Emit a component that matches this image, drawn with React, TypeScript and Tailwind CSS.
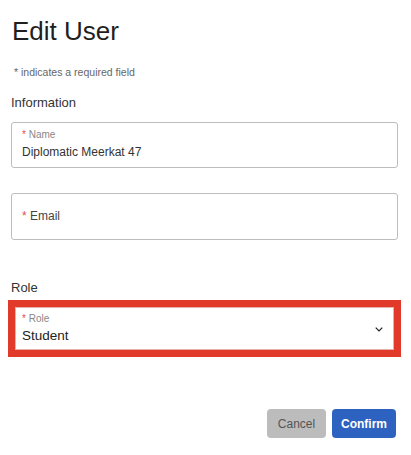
export default function App() {
  return (
    <div className="min-h-screen bg-white font-['Liberation_Sans',Arial,sans-serif] text-[#222]">
      <div className="flex flex-col pl-[11px] pr-[13px] pt-[16px]">
        {/* Header */}
        <h1 className="pl-px text-[26px] leading-[30px] font-normal text-[#1f1f1f]">Edit User</h1>
        <p className="mt-[19px] pl-[3px] text-[10.5px] leading-[14px] text-[#666]">* indicates a required field</p>

        {/* Information */}
        <h2 className="mt-[15px] text-[13px] leading-[18px] text-[#333]">Information</h2>
        <div className="mt-[10px] flex h-[46px] flex-col rounded-[3px] border border-[#bdbdbd] pl-[10px] pt-[6px]">
          <span className="text-[10px] leading-[12px] text-[#888]">
            <span className="text-[#d9534f]">*</span> Name
          </span>
          <span className="mt-[4px] text-[12px] leading-[15px] text-[#333]">Diplomatic Meerkat 47</span>
        </div>
        <div className="mt-[25px] flex h-[47px] items-center rounded-[3px] border border-[#bdbdbd] pl-[10px]">
          <span className="text-[12px] leading-[15px] text-[#444]">
            <span className="text-[#d9534f]">*</span> Email
          </span>
        </div>

        {/* Role */}
        <h2 className="mt-[39px] text-[13px] leading-[18px] text-[#333]">Role</h2>
        <div className="-mx-[3px] mt-[3px] border-[7px] border-[#e23a2a]">
          <div className="flex h-[43px] items-center justify-between border border-[#e8b0aa] bg-white pl-[6px] pr-[10px]">
            <div className="flex flex-col">
              <span className="text-[10px] leading-[12px] text-[#888]">
                <span className="text-[#d9534f]">*</span> Role
              </span>
              <span className="mt-[2px] text-[13.5px] leading-[17px] text-[#222]">Student</span>
            </div>
            <svg width="8" height="5" viewBox="0 0 8 5" className="mt-[1px]">
              <path d="M0.7 0.7l3.3 3.3 3.3-3.3" fill="none" stroke="#222" strokeWidth="1.2" />
            </svg>
          </div>
        </div>

        {/* Actions */}
        <div className="mt-[52px] flex justify-end gap-[6px] pr-[2px]">
          <button className="h-[29px] w-[59px] rounded-[4px] bg-[#bcbcbc] text-[12px] text-[#555]">Cancel</button>
          <button className="h-[29px] w-[64px] rounded-[4px] bg-[#2d62c0] text-[12px] font-bold text-white">Confirm</button>
        </div>
      </div>
    </div>
  )
}
